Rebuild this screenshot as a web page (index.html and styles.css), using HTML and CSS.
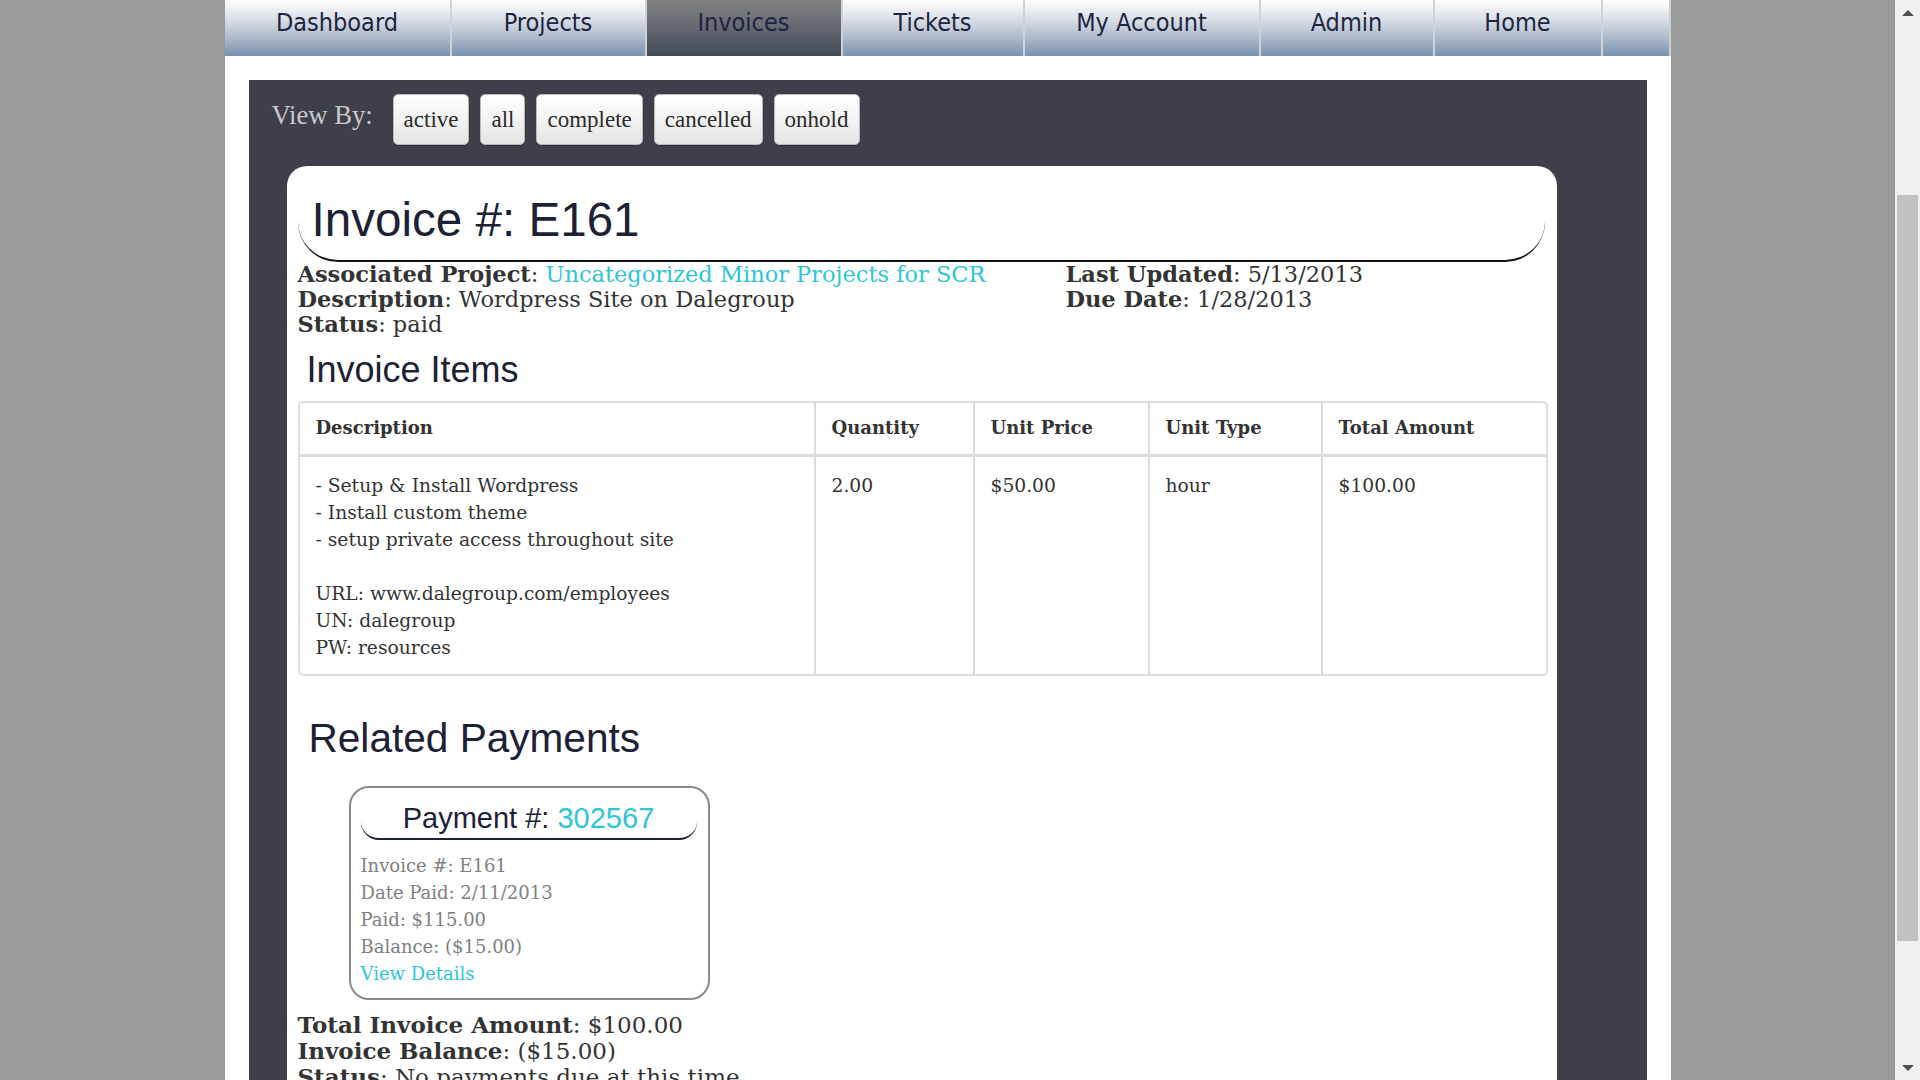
FILE: index.html
```html
<!DOCTYPE html>
<html lang="en">
<head>
<meta charset="utf-8">
<title>Invoice #: E161</title>
<link rel="stylesheet" href="styles.css">
</head>
<body>
<div class="viewport">
  <div class="page">
    <nav class="topnav">
      <a class="nav-item n-dashboard" href="#">Dashboard</a>
      <a class="nav-item n-projects" href="#">Projects</a>
      <a class="nav-item n-invoices active" href="#">Invoices</a>
      <a class="nav-item n-tickets" href="#">Tickets</a>
      <a class="nav-item n-account" href="#">My Account</a>
      <a class="nav-item n-admin" href="#">Admin</a>
      <a class="nav-item n-home" href="#">Home</a>
      <span class="nav-fill"></span>
    </nav>
    <div class="panel">
      <div class="viewby">
        <span class="viewby-label">View By:</span>
        <button class="vb-btn">active</button>
        <button class="vb-btn">all</button>
        <button class="vb-btn">complete</button>
        <button class="vb-btn">cancelled</button>
        <button class="vb-btn">onhold</button>
      </div>
      <div class="card">
        <div class="card-head"><h1>Invoice #: E161</h1></div>
        <div class="info">
          <div class="info-col">
            <div><b>Associated Project</b>: <a class="link" href="#">Uncategorized Minor Projects for SCR</a></div>
            <div><b>Description</b>: Wordpress Site on Dalegroup</div>
            <div><b>Status</b>: paid</div>
          </div>
          <div class="info-col">
            <div><b>Last Updated</b>: 5/13/2013</div>
            <div><b>Due Date</b>: 1/28/2013</div>
          </div>
        </div>
        <h2 class="section-title">Invoice Items</h2>
        <table class="items">
          <colgroup>
            <col class="c-desc"><col class="c-qty"><col class="c-price"><col class="c-type"><col class="c-total">
          </colgroup>
          <thead>
            <tr><th>Description</th><th>Quantity</th><th>Unit Price</th><th>Unit Type</th><th>Total Amount</th></tr>
          </thead>
          <tbody>
            <tr>
              <td>- Setup &amp; Install Wordpress<br>- Install custom theme<br>- setup private access throughout site<br><br>URL: www.dalegroup.com/employees<br>UN: dalegroup<br>PW: resources</td>
              <td>2.00</td>
              <td>$50.00</td>
              <td>hour</td>
              <td>$100.00</td>
            </tr>
          </tbody>
        </table>
        <h2 class="section-title big">Related Payments</h2>
        <div class="payments">
          <div class="pay-card">
            <div class="pay-head">Payment #: <a class="link" href="#">302567</a></div>
            <div class="pay-lines">
              <div>Invoice #: E161</div>
              <div>Date Paid: 2/11/2013</div>
              <div>Paid: $115.00</div>
              <div>Balance: ($15.00)</div>
              <div><a class="link" href="#">View Details</a></div>
            </div>
          </div>
        </div>
        <div class="totals">
          <div><b>Total Invoice Amount</b>: $100.00</div>
          <div><b>Invoice Balance</b>: ($15.00)</div>
          <div><b>Status</b>: No payments due at this time</div>
        </div>
      </div>
    </div>
  </div>
</div>
<div class="scrollbar">
  <div class="sb-btn"><span class="arrow-up"></span></div>
  <div class="sb-track"><div class="sb-thumb"></div></div>
  <div class="sb-btn"><span class="arrow-down"></span></div>
</div>
</body>
</html>
```
FILE: styles.css
```css
html, body {
  margin: 0;
  padding: 0;
}
body {
  display: flex;
  height: 100vh;
  overflow: hidden;
  font-family: "DejaVu Serif", serif;
}
.viewport {
  flex: 1;
  background: #999b9a;
  display: flex;
  justify-content: center;
  align-items: flex-start;
  overflow: hidden;
}
.page {
  width: 1446px;
  flex-shrink: 0;
  background: #fff;
  padding: 0 24px 400px;
  box-sizing: border-box;
}

/* top navigation */
.topnav {
  display: flex;
  height: 56px;
  margin: 0 -24px;
  background: linear-gradient(to bottom, #ffffff 0%, #d9dee6 35%, #a9b7c8 70%, #7a91ae 100%);
  border-right: 2px solid #cfcfcf;
}
.nav-item {
  display: block;
  box-sizing: border-box;
  text-align: center;
  line-height: 46px;
  font-family: "DejaVu Sans Condensed", "DejaVu Sans", sans-serif;
  font-stretch: condensed;
  font-size: 25px;
  color: #1d2540;
  text-decoration: none;
  border-right: 2px solid #cfd2d6;
}
.n-dashboard { width: 227px; }
.n-projects { width: 195px; }
.n-invoices { width: 196px; }
.n-tickets { width: 182px; }
.n-account { width: 236px; }
.n-admin { width: 174px; }
.n-home { width: 168px; }
.nav-item.active {
  background: linear-gradient(to bottom, #818181 0%, #646871 50%, #434a57 100%);
}
.nav-fill { flex: 1; }

/* dark panel */
.panel {
  margin-top: 24px;
  background: #3f3f49;
  padding: 14px 0 0 23px;
}
.viewby {
  display: flex;
  align-items: flex-start;
  gap: 11px;
}
.viewby-label {
  font-family: "Liberation Serif", serif;
  font-size: 26.6px;
  line-height: 30px;
  color: #c9c9c9;
  margin-top: 6px;
  margin-right: 9px;
}
.vb-btn {
  font-family: "Liberation Serif", serif;
  font-size: 23px;
  line-height: 27px;
  padding: 11px 10px;
  color: #2a2a2a;
  background: linear-gradient(to bottom, #ffffff 0%, #f3f3f3 50%, #e4e4e4 100%);
  border: 1px solid #b9b9b9;
  border-radius: 5px;
  box-shadow: 0 1px 1px rgba(0,0,0,0.25);
}

/* invoice card */
.card {
  margin: 21px 90px 0 15px;
  background: #fff;
  border-radius: 20px 20px 0 0;
  padding: 27px 12px 0 11px;
  color: #333;
}
.card-head {
  padding: 0 10px 13px 14px;
  border-bottom: 2px solid #111;
  border-radius: 0 0 40px 40px;
}
.card-head h1 {
  margin: 0;
  font-family: "Liberation Sans", Arial, sans-serif;
  font-weight: normal;
  font-size: 47.6px;
  line-height: 54px;
  color: #1c2136;
}
.info {
  display: grid;
  grid-template-columns: 768px 1fr;
  font-size: 22.5px;
  line-height: 25px;
}
b { font-weight: bold; color: #333; }
.link {
  color: #2cc6d6;
  text-decoration: none;
}
.section-title {
  margin: 12px 0 11px;
  padding-left: 9px;
  font-family: "Liberation Sans", Arial, sans-serif;
  font-weight: normal;
  font-size: 36px;
  line-height: 41px;
  color: #1c2136;
}
.section-title.big {
  margin: 39px 0 25px;
  padding-left: 11px;
  font-size: 40.6px;
  line-height: 46px;
}

/* items table */
.items {
  width: 100%;
  table-layout: fixed;
  border-collapse: separate;
  border-spacing: 0;
  border: 2px solid #dcdcdc;
  border-radius: 5px;
}
.c-desc { width: 514px; }
.c-qty { width: 159px; }
.c-price { width: 175px; }
.c-type { width: 173px; }
.c-total { width: 225px; }
.items th {
  text-align: left;
  font-size: 18px;
  line-height: 27px;
  padding: 11px 16px 13px;
  border-bottom: 3px solid #dcdcdc;
  color: #333;
}
.items td {
  vertical-align: top;
  font-size: 18.7px;
  line-height: 27px;
  padding: 15px 16px 13px;
  color: #333;
}
.items th + th,
.items td + td {
  border-left: 2px solid #dcdcdc;
}

/* payments */
.payments {
  padding-left: 51px;
}
.pay-card {
  width: 361px;
  box-sizing: border-box;
  border: 2px solid #8a8a8a;
  border-radius: 20px;
  padding: 14px 11px 11px 10px;
}
.pay-head {
  font-family: "Liberation Sans", Arial, sans-serif;
  font-size: 29px;
  line-height: 32px;
  text-align: center;
  color: #1c2136;
  padding-bottom: 4px;
  border-bottom: 2px solid #1c2136;
  border-radius: 0 0 18px 18px;
}
.pay-lines {
  margin-top: 12px;
  font-size: 18px;
  line-height: 27px;
  color: #808080;
}
.totals {
  margin-top: 12px;
  font-size: 23px;
  line-height: 25px;
}

/* scrollbar */
.scrollbar {
  width: 25px;
  flex-shrink: 0;
  background: #f0f0f0;
  display: flex;
  flex-direction: column;
}
.sb-btn {
  height: 25px;
  display: flex;
  align-items: center;
  justify-content: center;
}
.arrow-up {
  border-left: 6px solid transparent;
  border-right: 6px solid transparent;
  border-bottom: 6px solid #505050;
}
.arrow-down {
  border-left: 6px solid transparent;
  border-right: 6px solid transparent;
  border-top: 6px solid #505050;
}
.sb-track {
  flex: 1;
  padding: 170px 2px 0;
}
.sb-thumb {
  height: 746px;
  background: #c1c1c1;
}
```
